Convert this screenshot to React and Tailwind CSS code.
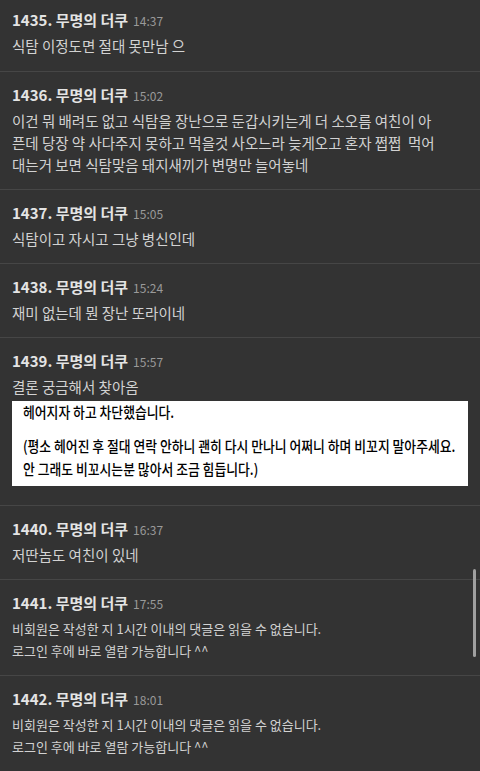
import React from 'react';

const FONT = { fontFamily: '"Noto Sans CJK KR", "Noto Sans", sans-serif' };

const comments = [
  {
    no: '1435',
    time: '14:37',
    lines: ['식탐 이정도면 절대 못만남 으'],
    first: true,
  },
  {
    no: '1436',
    time: '15:02',
    lines: [
      '이건 뭐 배려도 없고 식탐을 장난으로 둔갑시키는게 더 소오름 여친이 아',
      '픈데 당장 약 사다주지 못하고 먹을것 사오느라 늦게오고 혼자 쩝쩝  먹어',
      '대는거 보면 식탐맞음 돼지새끼가 변명만 늘어놓네',
    ],
  },
  { no: '1437', time: '15:05', lines: ['식탐이고 자시고 그냥 병신인데'] },
  { no: '1438', time: '15:24', lines: ['재미 없는데 뭔 장난 또라이네'] },
  { no: '1439', time: '15:57', lines: ['결론 궁금해서 찾아옴'], image: true },
  { no: '1440', time: '16:37', lines: ['저딴놈도 여친이 있네'] },
  {
    no: '1441',
    time: '17:55',
    small: true,
    lines: ['비회원은 작성한 지 1시간 이내의 댓글은 읽을 수 없습니다.', '로그인 후에 바로 열람 가능합니다 ^^'],
  },
  {
    no: '1442',
    time: '18:01',
    small: true,
    last: true,
    lines: ['비회원은 작성한 지 1시간 이내의 댓글은 읽을 수 없습니다.', '로그인 후에 바로 열람 가능합니다 ^^'],
  },
];

const Capture = () => (
  <div className="mt-[3px] bg-white pl-[11px] pb-[6px] text-black font-medium text-[15px] whitespace-nowrap overflow-hidden">
    <div className="leading-[22px] origin-left scale-x-[0.855]">헤어지자 하고 차단했습니다.</div>
    <div className="mt-[11px] leading-[23px] origin-left scale-x-[0.855]">
      (평소 헤어진 후 절대 연락 안하니 괜히 다시 만나니 어쩌니 하며 비꼬지 말아주세요.
    </div>
    <div className="leading-[23px] origin-left scale-x-[0.855]">안 그래도 비꼬시는분 많아서 조금 힘듭니다.)</div>
  </div>
);

const Comment = ({ c }) => (
  <div
    className={`px-3 ${c.first ? 'pt-[10px] pb-[14px]' : 'pt-[13px]'} ${
      c.image ? 'pb-[19px]' : c.first ? '' : 'pb-[13px]'
    } ${c.last ? '' : 'border-b border-[#464646]'}`}
  >
    <div className="flex items-baseline h-5 leading-5">
      <span className="text-[15px] font-bold text-[#e4e4e4]">{c.no}. 무명의 더쿠</span>
      <span className="ml-[5px] text-[12px] text-[#9a9a9a]">{c.time}</span>
    </div>
    <div
      className={`mt-[5px] leading-[22px] text-[#d2d2d2] whitespace-pre ${
        c.small ? 'text-[13px]' : 'text-[14.5px]'
      }`}
    >
      {c.lines.map((l, i) => (
        <div key={i}>{l}</div>
      ))}
    </div>
    {c.image && <Capture />}
  </div>
);

export default function App() {
  return (
    <div className="relative w-full h-[771px] overflow-hidden bg-[#333333]" style={FONT}>
      {comments.map(c => (
        <Comment key={c.no} c={c} />
      ))}
      <div className="absolute left-[473px] top-[569px] w-[3px] h-[88px] rounded-full bg-[#a0a0a0]" />
    </div>
  );
}
